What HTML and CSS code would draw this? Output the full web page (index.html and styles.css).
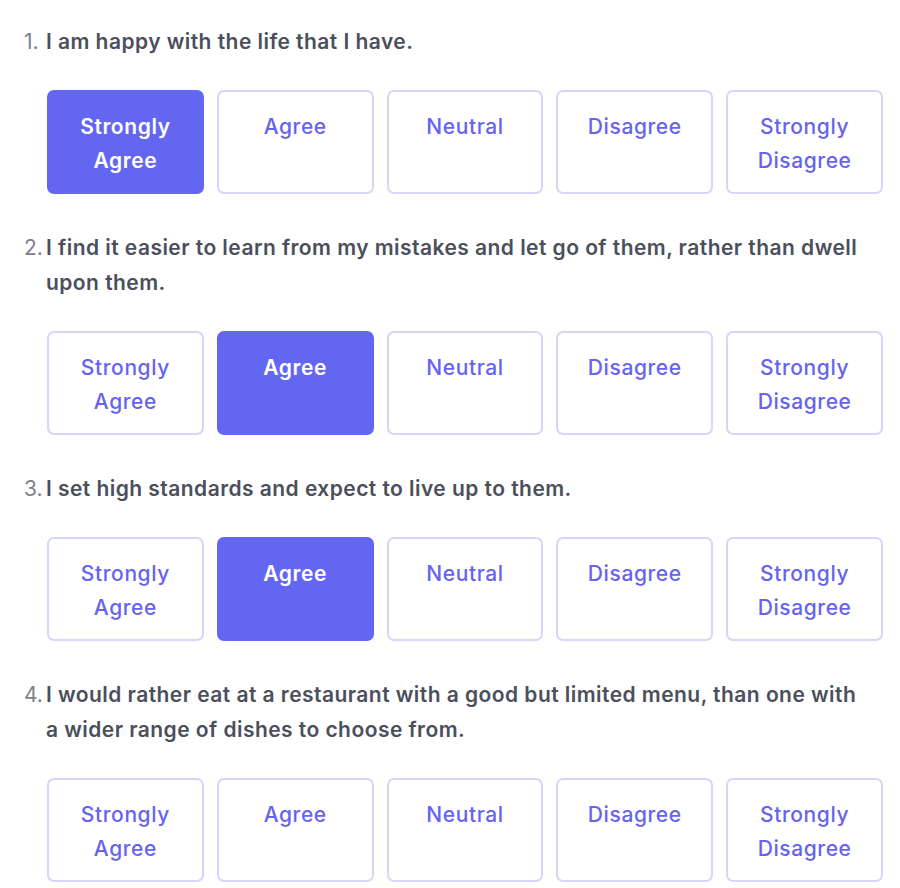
FILE: index.html
```html
<!DOCTYPE html>
<html lang="en">
<head>
<meta charset="utf-8">
<title>Questionnaire</title>
<link rel="stylesheet" href="styles.css">
</head>
<body>
<main class="quiz">
  <section class="item">
    <p class="question"><span class="num">1.</span><span class="text">I am happy with the life that I have.</span></p>
    <div class="options">
      <button class="opt selected">Strongly Agree</button>
      <button class="opt">Agree</button>
      <button class="opt">Neutral</button>
      <button class="opt">Disagree</button>
      <button class="opt">Strongly Disagree</button>
    </div>
  </section>
  <section class="item">
    <p class="question"><span class="num">2.</span><span class="text">I find it easier to learn from my mistakes and let go of them, rather than dwell upon them.</span></p>
    <div class="options">
      <button class="opt">Strongly Agree</button>
      <button class="opt selected">Agree</button>
      <button class="opt">Neutral</button>
      <button class="opt">Disagree</button>
      <button class="opt">Strongly Disagree</button>
    </div>
  </section>
  <section class="item">
    <p class="question"><span class="num">3.</span><span class="text">I set high standards and expect to live up to them.</span></p>
    <div class="options">
      <button class="opt">Strongly Agree</button>
      <button class="opt selected">Agree</button>
      <button class="opt">Neutral</button>
      <button class="opt">Disagree</button>
      <button class="opt">Strongly Disagree</button>
    </div>
  </section>
  <section class="item">
    <p class="question"><span class="num">4.</span><span class="text">I would rather eat at a restaurant with a good but limited menu, than one with a wider range of dishes to choose from.</span></p>
    <div class="options">
      <button class="opt">Strongly Agree</button>
      <button class="opt">Agree</button>
      <button class="opt">Neutral</button>
      <button class="opt">Disagree</button>
      <button class="opt">Strongly Disagree</button>
    </div>
  </section>
</main>
</body>
</html>
```
FILE: styles.css
```css
* { box-sizing: border-box; }
html, body { margin: 0; padding: 0; background: #ffffff; }
body {
  font-family: Inter, "Noto Sans", "Liberation Sans", sans-serif;
  color: #4b4f5c;
}
.quiz {
  padding: 24px 0 0 24px;
  width: 900px;
}
.item { margin-bottom: 36px; }
.question {
  display: flex;
  margin: 0 0 31px 0;
  font-size: 21px;
  line-height: 35px;
  width: 850px;
}
.num {
  flex: 0 0 22px;
  font-weight: 400;
  color: #7d818c;
}
.text {
  font-weight: 600;
  color: #4b4f5c;
  letter-spacing: 0.45px;
}
.options {
  margin-left: 23px;
  width: 836px;
  display: grid;
  grid-template-columns: repeat(5, 1fr);
  gap: 13px;
}
.opt {
  height: 104px;
  padding: 18px 10px;
  border: 2px solid #d6d6fb;
  border-radius: 7px;
  background: #ffffff;
  color: #6563ef;
  font-family: inherit;
  font-size: 21px;
  font-weight: 500;
  letter-spacing: 0.6px;
  line-height: 34px;
  text-align: center;
  display: flex;
  align-items: flex-start;
  justify-content: center;
}
.opt.selected {
  background: #6366f1;
  border-color: #6366f1;
  color: #ffffff;
  font-weight: 600;
}
```
